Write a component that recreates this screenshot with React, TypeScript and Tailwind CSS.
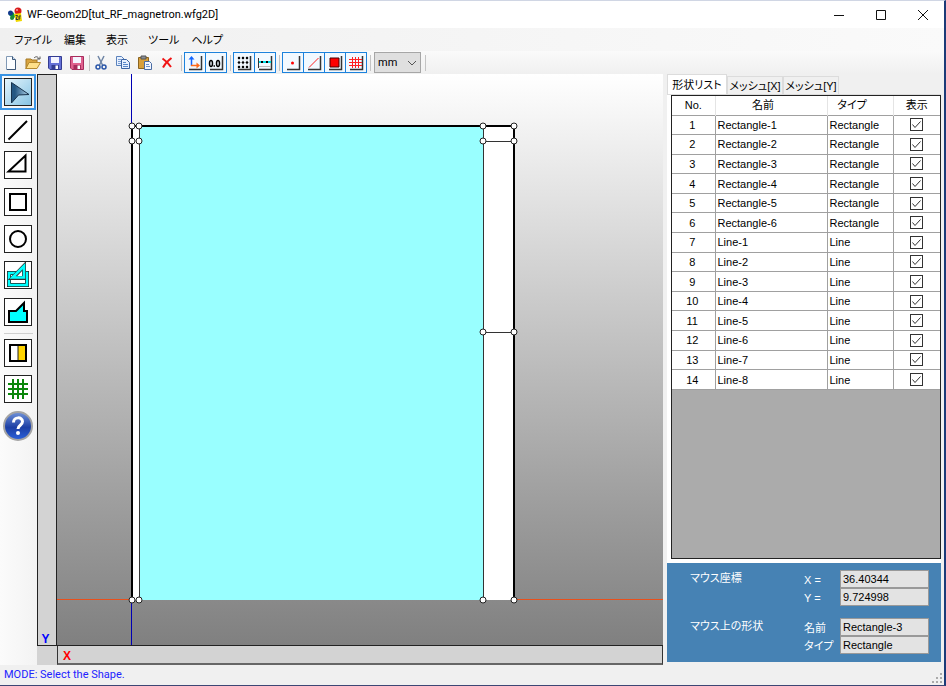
import { useState, type ReactNode } from 'react'
import clsx from 'clsx'

type Shape = { no: number; name: string; type: string }

const shapes: Shape[] = [
  ...[1, 2, 3, 4, 5, 6].map((n) => ({ no: n, name: `Rectangle-${n}`, type: 'Rectangle' })),
  ...[1, 2, 3, 4, 5, 6, 7, 8].map((n) => ({ no: n + 6, name: `Line-${n}`, type: 'Line' })),
]

const vertices = [
  [75, 52], [82, 52], [75, 67], [82, 67], [426, 52], [457, 52], [426, 67], [457, 67],
  [426, 258], [457, 258], [75, 526], [82, 526], [426, 526], [457, 526],
]

function Icon({ size = 16, children }: { size?: number; children: ReactNode }) {
  return (
    <svg width={size} height={size} viewBox={`0 0 ${size} ${size}`} fill="none" aria-hidden="true" className="shrink-0">
      {children}
    </svg>
  )
}

function Floppy({ color, dark }: { color: string; dark: string }) {
  return (
    <Icon>
      <path d="M1.500 1.500h13v13H3l-1.500-1.500z" fill={color} stroke={dark} />
      <path d="M4 2h8v6H4z" fill="#f4f4ff" />
      <path d="M4.500 10h7.500v4H4.500z" fill={dark} />
      <path d="M8.500 10.500h2.500V14H8.500z" fill="#fff" />
    </Icon>
  )
}

const fileIcons: { label: string; icon: ReactNode }[] = [
  {
    label: 'New',
    icon: (
      <Icon>
        <path d="M3.500 1.500h6l3 3v10h-9z" fill="#fbfdff" stroke="#8199b5" />
        <path d="M12.500 5v9.500H4" stroke="#3e5878" />
        <path d="M9.500 1.500v3h3" fill="#c8daf0" stroke="#3e5878" />
      </Icon>
    ),
  },
  {
    label: 'Open',
    icon: (
      <Icon>
        <path d="M1 4h5l1 1h5v3H4l-3 6z" fill="#d9a440" stroke="#a47925" />
        <path d="M4 7.500h11.500L12 13.500H1z" fill="#ffe08a" stroke="#b58a30" />
        <path d="M9 3c2-2 4-1.500 5 1" stroke="#555" />
        <path d="M12 4h3V1.500" stroke="#555" />
      </Icon>
    ),
  },
  { label: 'Save', icon: <Floppy color="#6570d6" dark="#343c91" /> },
  { label: 'Save as', icon: <Floppy color="#e0618e" dark="#a62c5c" /> },
]

const editIcons: { label: string; icon: ReactNode }[] = [
  {
    label: 'Cut',
    icon: (
      <Icon>
        <path d="M5 1l4.500 9M11 1L6.500 10" stroke="#6f85a5" strokeWidth="1.500" />
        <circle cx="5" cy="12" r="2" stroke="#2a56a8" strokeWidth="1.500" />
        <circle cx="11" cy="12" r="2" stroke="#2a56a8" strokeWidth="1.500" />
      </Icon>
    ),
  },
  {
    label: 'Copy',
    icon: (
      <Icon>
        <path d="M1.500 1.500h5l3 3v6h-8z" fill="#e8f1ff" stroke="#5b82bc" />
        <path d="M3 4.500h3M3 6.500h4M3 8.500h4" stroke="#7ca0d4" />
        <path d="M6.500 4.500h5l3 3v6h-8z" fill="#e8f1ff" stroke="#3e65a4" />
        <path d="M8 7.500h3M8 9.500h5M8 11.500h5" stroke="#5b88c8" />
      </Icon>
    ),
  },
  {
    label: 'Paste',
    icon: (
      <Icon>
        <path d="M1.500 2.500h10v11h-10z" fill="#d9a03c" stroke="#8a6420" />
        <path d="M4 1h5v3H4z" fill="#8a8f98" stroke="#555" />
        <path d="M7.500 6.500h5l2 2v6h-7z" fill="#f2f6ff" stroke="#4a6ca4" />
        <path d="M9 9.500h3M9 11.500h4" stroke="#6d90c8" />
      </Icon>
    ),
  },
  {
    label: 'Delete',
    icon: (
      <Icon>
        <path d="M3.500 3.500c3 2 6 5 8.500 8.500M12.500 3C9 5.500 6 8.500 4 12.500" stroke="#f01414" strokeWidth="2" />
      </Icon>
    ),
  },
]

// raised edge at the right and bottom of every toggle icon
const edge = <path d="M14.500 1v13.500H2" stroke="#333" strokeWidth="1.500" />

const toggleGroups: { label: string; icon: ReactNode }[][] = [
  [
    {
      label: 'Axis',
      icon: (
        <Icon>
          {edge}
          <path d="M4.500 4v7" stroke="#1266ff" strokeWidth="1.500" />
          <path d="M1.500 4.500l3-3.500 3 3.500z" fill="#1266ff" />
          <path d="M4 10.500h6" stroke="#ff6a1a" strokeWidth="1.500" />
          <path d="M9.500 7.500l3.500 3-3.500 3z" fill="#ff6a1a" />
        </Icon>
      ),
    },
    {
      label: 'Coordinates',
      icon: (
        <Icon>
          {edge}
          <ellipse cx="3" cy="8.500" rx="1.500" ry="3" stroke="#000" strokeWidth="1.500" />
          <path d="M5.500 11h1.500" stroke="#000" strokeWidth="1.500" />
          <ellipse cx="10" cy="8.500" rx="1.500" ry="3" stroke="#000" strokeWidth="1.500" />
        </Icon>
      ),
    },
  ],
  [
    {
      label: 'Grid',
      icon: (
        <Icon>
          {edge}
          <path d="M1 3h12M1 7.500h12M1 12h12M3 1v12M7 1v12M11 1v12" stroke="#bbb" strokeWidth="0.500" />
          {[3, 7.5, 12].map((y) =>
            [3, 7, 11].map((x) => <circle key={`${x}-${y}`} cx={x} cy={y} r="1.200" fill="#000" />),
          )}
        </Icon>
      ),
    },
    {
      label: 'Snap',
      icon: (
        <Icon>
          {edge}
          <path d="M1.500 3v10" stroke="#333" />
          <path d="M2 7h12" stroke="#00dfe8" strokeWidth="2" />
          <path d="M4 7h2M9 7h2" stroke="#000" strokeWidth="2" />
          <path d="M2 11.500h12" stroke="#bbb" />
        </Icon>
      ),
    },
  ],
  [
    { label: 'Point', icon: <Icon>{edge}<circle cx="7.500" cy="8" r="1.500" fill="#f00" /></Icon> },
    { label: 'Edge', icon: <Icon>{edge}<path d="M3 12.500L12.500 3" stroke="#f22" /></Icon> },
    { label: 'Face', icon: <Icon>{edge}<path d="M3 3h9v9H3z" fill="#f00" stroke="#400" /></Icon> },
    { label: 'Mesh', icon: <Icon>{edge}<path d="M4.500 2v11M7.500 2v11M10.500 2v11M1 4.500h13M1 7.500h13M1 10.500h13" stroke="#f22" /></Icon> },
  ],
]

const drawTools: { id: string; icon: ReactNode }[] = [
  {
    id: 'Select',
    icon: (
      <Icon size={26}>
        <defs>
          <linearGradient id="arrow" x1="0" x2="1">
            <stop offset="0.200" stopColor="#245782" />
            <stop offset="1" stopColor="#b4d8ee" />
          </linearGradient>
        </defs>
        <path d="M6.500 3.500L24 15.500l-10.500.500-7 8z" fill="url(#arrow)" stroke="#17324c" />
      </Icon>
    ),
  },
  { id: 'Line', icon: <Icon size={26}><path d="M3.500 23.500L22 5" stroke="#000" strokeWidth="2" /></Icon> },
  { id: 'Polygon', icon: <Icon size={26}><path d="M3.500 19.500h17V3.500z" stroke="#000" strokeWidth="2" /></Icon> },
  { id: 'Rectangle', icon: <Icon size={26}><path d="M5 5h16v16H5z" stroke="#000" strokeWidth="2" /></Icon> },
  { id: 'Circle', icon: <Icon size={26}><circle cx="13" cy="13" r="8" stroke="#000" strokeWidth="2" /></Icon> },
  {
    id: 'Combine',
    icon: (
      <Icon size={26}>
        <path d="M4 11h18v12H4z" fill="#fff" stroke="#222" strokeWidth="4" />
        <path d="M4 11h18v12H4z" stroke="#0ff" strokeWidth="2.500" />
        <path d="M7.500 16L19 4v12z" fill="#fff" stroke="#333" strokeWidth="4" />
        <path d="M7.500 15.500L19 4v11.500z" stroke="#0ff" strokeWidth="2.500" />
      </Icon>
    ),
  },
  { id: 'Fill', icon: <Icon size={26}><path d="M4 23V12h7l8-8v8h3v11z" fill="#0ff" stroke="#000" strokeWidth="2" /></Icon> },
]

const meshTools: { id: string; icon: ReactNode }[] = [
  {
    id: 'Material',
    icon: (
      <Icon size={26}>
        <path d="M5 5h16v16H5z" fill="#fff" />
        <path d="M13 5h8v16h-8z" fill="#ffd400" />
        <path d="M13 5v16" stroke="#222" />
        <path d="M5 5h16v16H5z" stroke="#000" strokeWidth="2" />
      </Icon>
    ),
  },
  {
    id: 'Mesh',
    icon: (
      <Icon size={26}>
        <path d="M8 3v20M13 3v20M18 3v20M3 8h20M3 13h20M3 18h20" stroke="#0a870a" strokeWidth="2" />
      </Icon>
    ),
  },
]

function ToolButton({ id, icon, active, onClick }: { id: string; icon: ReactNode; active: boolean; onClick: () => void }) {
  return (
    <button
      type="button"
      aria-label={id}
      aria-pressed={active}
      onClick={onClick}
      className={clsx(
        'flex size-7 items-center justify-center border border-[#222]',
        active ? 'bg-linear-to-br from-[#e4f4fc] to-[#86c4e4] outline-2 outline-offset-2 outline-[#3a94e4]' : 'bg-white',
      )}
    >
      {icon}
    </button>
  )
}

function Separator() {
  return <div className="mr-[3px] ml-1 h-4 w-px shrink-0 bg-[#c4c4c4]" />
}

function TitleBar() {
  return (
    <header className="flex h-[27px] shrink-0 items-center bg-white">
      <div className="flex flex-1 items-center gap-1 pl-[7px]">
        <Icon>
          <path d="M2 8l4-3 3 4-3 3z" fill="#0a9a3a" />
          <circle cx="3.500" cy="6" r="2.500" fill="#113a8c" />
          <circle cx="5" cy="11" r="2" fill="#1c8a3c" />
          <circle cx="11" cy="4" r="3.500" fill="#d81a1a" />
          <circle cx="10" cy="3" r="1" fill="#ff9a9a" />
          <path d="M7 7l7-1 1 8-6 1z" fill="#f0d800" />
          <path d="M8.500 8.500h2l-1.500 4h2M12 13V9h2M12 11h1.500" stroke="#333" />
        </Icon>
        <h1 className="font-['Roboto',sans-serif] text-[11px] leading-4">WF-Geom2D[tut_RF_magnetron.wfg2D]</h1>
      </div>
      <div className="flex">
        <button type="button" aria-label="Minimize" className="flex h-[26px] w-[42px] items-center justify-center">
          <Icon size={12}><path d="M1 6.500h10" stroke="#111" /></Icon>
        </button>
        <button type="button" aria-label="Maximize" className="flex h-[26px] w-[42px] items-center justify-center">
          <Icon size={12}><path d="M1.500 1.500h9v9h-9z" stroke="#111" /></Icon>
        </button>
        <button type="button" aria-label="Close" className="flex h-[26px] w-[42px] items-center justify-center">
          <Icon size={12}><path d="M1 1l10 10M11 1L1 11" stroke="#111" /></Icon>
        </button>
      </div>
    </header>
  )
}

function Toolbar() {
  const [unit, setUnit] = useState('mm')
  return (
    <div className="flex h-[23px] shrink-0 items-center bg-linear-to-b from-[#fafafa] to-[#f0f0f0]">
      {fileIcons.map((b) => (
        <button key={b.label} type="button" aria-label={b.label} className="flex w-[22px] justify-center">
          {b.icon}
        </button>
      ))}
      <div className="ml-px h-4 w-px bg-[#c4c4c4]" />
      {editIcons.map((b) => (
        <button key={b.label} type="button" aria-label={b.label} className="flex w-[22px] justify-center">
          {b.icon}
        </button>
      ))}
      <div className="mr-[2px] ml-[3px] h-4 w-px bg-[#c4c4c4]" />
      {toggleGroups.map((group, i) => (
        <div key={i} className="flex items-center">
          {i > 0 ? <div className="mr-[2px] ml-1 h-4 w-px bg-[#c4c4c4]" /> : null}
          {group.map((b) => (
            <button
              key={b.label}
              type="button"
              aria-label={b.label}
              className="-mr-px flex h-[21px] w-[22px] items-center justify-center border border-[#1c82dc] bg-[#f2f9ff]"
            >
              {b.icon}
            </button>
          ))}
        </div>
      ))}
      <Separator />
      <div className="relative">
        <select
          aria-label="Unit"
          value={unit}
          onChange={(e) => setUnit(e.target.value)}
          className="block h-[21px] w-[47px] appearance-none border border-[#a6a6a6] bg-[#dfdfdf] pl-[3px] font-['Roboto',sans-serif] text-[11px] leading-4"
        >
          <option>mm</option>
          <option>cm</option>
          <option>m</option>
        </select>
        <svg viewBox="0 0 10 6" className="pointer-events-none absolute top-2 right-1 h-[6px] w-[10px]" fill="none">
          <path d="M1 1l4 4 4-4" stroke="#555" />
        </svg>
      </div>
      <Separator />
    </div>
  )
}

function ToolPalette() {
  const [tool, setTool] = useState('Select')
  return (
    <nav className="w-[37px] shrink-0 bg-linear-to-r from-[#fbfbfb] to-[#f3f3f3] px-1 pt-1">
      <div className="flex h-[248px] flex-col justify-between">
        {drawTools.map((t) => (
          <ToolButton key={t.id} {...t} active={tool === t.id} onClick={() => setTool(t.id)} />
        ))}
      </div>
      <div className="mt-[7px] mb-[5px] h-px bg-[#cfcfcf]" />
      <div className="flex flex-col gap-2">
        {meshTools.map((t) => (
          <ToolButton key={t.id} {...t} active={tool === t.id} onClick={() => setTool(t.id)} />
        ))}
        <button type="button" aria-label="Help" className="-ml-px size-[30px]">
          <svg viewBox="0 0 30 30" fill="none">
            <defs>
              <linearGradient id="help" x1="0" y1="0" x2="0" y2="1">
                <stop offset="0" stopColor="#7294da" />
                <stop offset="0.550" stopColor="#1c3fa4" />
                <stop offset="1" stopColor="#2c62dc" />
              </linearGradient>
            </defs>
            <circle cx="15" cy="15" r="14" fill="url(#help)" stroke="#a4a4a4" strokeWidth="2" />
            <path d="M10.500 11.500c0-6 9-6 9-1 0 4-4.500 3.500-4.500 7.500" stroke="#fff" strokeWidth="3" />
            <circle cx="15" cy="22" r="2" fill="#fff" />
          </svg>
        </button>
      </div>
    </nav>
  )
}

function Workspace() {
  return (
    <main className="grid min-w-0 flex-1 grid-cols-[20px_1fr] grid-rows-[1fr_19px]">
      <div className="flex items-end justify-center border border-[#222] bg-[#d3d3d3] pr-[3px] text-[12px] leading-3 font-bold text-[#00f]">
        Y
      </div>
      <div className="min-h-0 overflow-hidden border-b border-[#222] bg-linear-to-b from-white to-[#808080]">
        <svg className="block size-full" fill="none">
          <path d="M0 525.500h2000" stroke="#e8501c" />
          <path d="M74.500 0v2000" stroke="#0000b4" />
          <path d="M75 52h382v474H75z" fill="#fff" />
          <path d="M82 52h344v474H82z" fill="#9ff" />
          <path d="M82.500 52v474M426.500 52v474M426 67.500h31M426 258.500h31" stroke="#333" />
          <path d="M75 526V52h382v474" stroke="#000" strokeWidth="2" />
          {vertices.map(([x, y]) => (
            <circle key={`${x}-${y}`} cx={x} cy={y} r="3" fill="#fff" stroke="#222" />
          ))}
        </svg>
      </div>
      <div className="bg-[#d3d3d3]" />
      <div className="border-x border-b-2 border-[#333] border-b-[#666] bg-[#d3d3d3] pl-[5px] text-[12px] leading-5 font-bold text-[#f00]">
        X
      </div>
    </main>
  )
}

function ShapeTable() {
  const [hidden, setHidden] = useState<number[]>([])

  const toggle = (no: number) => {
    setHidden((prev) => (prev.includes(no) ? prev.filter((n) => n !== no) : [...prev, no]))
  }

  return (
    <div className="mb-1 ml-1 flex-1 overflow-hidden border border-[#222] bg-[#ababab]">
      <table className="h-[294px] w-full table-fixed border-collapse bg-white text-[11px] leading-4">
        <colgroup>
          <col className="w-[43px]" />
          <col className="w-[112px]" />
          <col className="w-[66px]" />
          <col />
        </colgroup>
        <thead>
          <tr className="h-[19px]">
            <th className="border-r border-[#e4e4e4] p-0 font-normal">No.</th>
            <th className="border-r border-[#e4e4e4] p-0 pr-4 font-normal">名前</th>
            <th className="border-r border-[#e4e4e4] p-0 pr-4 font-normal">タイプ</th>
            <th className="p-0 font-normal">表示</th>
          </tr>
        </thead>
        <tbody>
          {shapes.map((s) => (
            <tr key={s.no} className="border-y border-[#a0a0a0]">
              <td className="border-r border-[#a0a0a0] p-0 pr-[2px] text-center">{s.no}</td>
              <td className="border-r border-[#a0a0a0] p-0 pl-[2px]">{s.name}</td>
              <td className="border-r border-[#a0a0a0] p-0 pl-[2px]">{s.type}</td>
              <td className="p-0">
                <label className="relative mx-auto block size-[13px]">
                  <input
                    type="checkbox"
                    aria-label={s.name}
                    checked={!hidden.includes(s.no)}
                    onChange={() => toggle(s.no)}
                    className="peer block size-[13px] appearance-none border border-[#333] bg-white"
                  />
                  <svg viewBox="0 0 13 13" fill="none" className="pointer-events-none absolute inset-0 hidden peer-checked:block">
                    <path d="M2.500 6.500L5 9.500l5.500-6" stroke="#333" />
                  </svg>
                </label>
              </td>
            </tr>
          ))}
        </tbody>
      </table>
    </div>
  )
}

function InfoField({ id, label, value }: { id: string; label: string; value: string }) {
  return (
    <div className="flex items-center">
      <label htmlFor={id} className="w-9 pt-[2px] text-[11px] leading-4">
        {label}
      </label>
      <input
        id={id}
        readOnly
        value={value}
        className="h-[18px] w-[89px] border border-[#999] bg-[#e3e3e3] px-[2px] text-[11px] text-black"
      />
    </div>
  )
}

function SidePanel() {
  const [tab, setTab] = useState('形状リスト')
  return (
    <aside className="flex w-[281px] shrink-0 flex-col bg-[#f0f0f0] pr-[3px] pl-1">
      <div role="tablist" className="flex h-5 shrink-0 items-end text-[11px] leading-4">
        {['形状リスト', 'メッシュ[X]', 'メッシュ[Y]'].map((name) => (
          <button
            key={name}
            type="button"
            role="tab"
            aria-selected={tab === name}
            onClick={() => setTab(name)}
            className={clsx(
              'border border-b-0 border-[#dcdcdc] whitespace-nowrap',
              tab === name ? 'h-5 w-[60px] bg-white' : 'h-[18px] w-[56px] bg-[#f0f0f0]',
            )}
          >
            {name}
          </button>
        ))}
      </div>
      <div className="flex min-h-0 flex-1 flex-col border-t border-[#dcdcdc] bg-white">
        <ShapeTable />
      </div>
      <section className="flex justify-between bg-[#4682b4] pt-[7px] pr-3 pb-2 pl-[23px] text-white">
        <div className="flex flex-col gap-8 text-[11px] leading-4">
          <h2>マウス座標</h2>
          <h2>マウス上の形状</h2>
        </div>
        <div className="flex flex-col gap-3">
          <div>
            <InfoField id="mouse-x" label="X =" value="36.40344" />
            <InfoField id="mouse-y" label="Y =" value="9.724998" />
          </div>
          <div>
            <InfoField id="shape-name" label="名前" value="Rectangle-3" />
            <InfoField id="shape-type" label="タイプ" value="Rectangle" />
          </div>
        </div>
      </section>
      <div className="h-[3px] shrink-0" />
    </aside>
  )
}

export default function App() {
  return (
    <div className="flex h-screen flex-col border-t border-r-2 border-b border-t-[#d0d6e4] border-r-[#1c3b78] border-b-[#3c4674] bg-[#f0f0f0] font-['Liberation_Sans','Noto_Sans_CJK_JP',sans-serif] text-black [font-feature-settings:'palt']">
      <TitleBar />
      <nav className="flex h-[23px] shrink-0 items-center gap-3 bg-linear-to-r from-[#f0f0f0] to-[#fafafa] pl-[14px] text-[11px] leading-4">
        {['ファイル', '編集', '表示', 'ツール', 'ヘルプ'].map((m) => (
          <button key={m} type="button" className="min-w-[30px] text-left">
            {m}
          </button>
        ))}
      </nav>
      <Toolbar />
      <div className="flex min-h-0 flex-1">
        <ToolPalette />
        <Workspace />
        <SidePanel />
      </div>
      <footer className="flex h-5 shrink-0 items-center justify-between bg-[#f0f0f0] pl-1">
        <span className="font-['Roboto',sans-serif] text-[11px] leading-4 text-[#22f]">MODE: Select the Shape.</span>
        <svg width="12" height="12" viewBox="0 0 12 12" className="self-end" fill="#aaa">
          <path d="M8 0h2v2H8zM8 4h2v2H8zM4 4h2v2H4zM8 8h2v2H8zM4 8h2v2H4zM0 8h2v2H0z" />
        </svg>
      </footer>
    </div>
  )
}
